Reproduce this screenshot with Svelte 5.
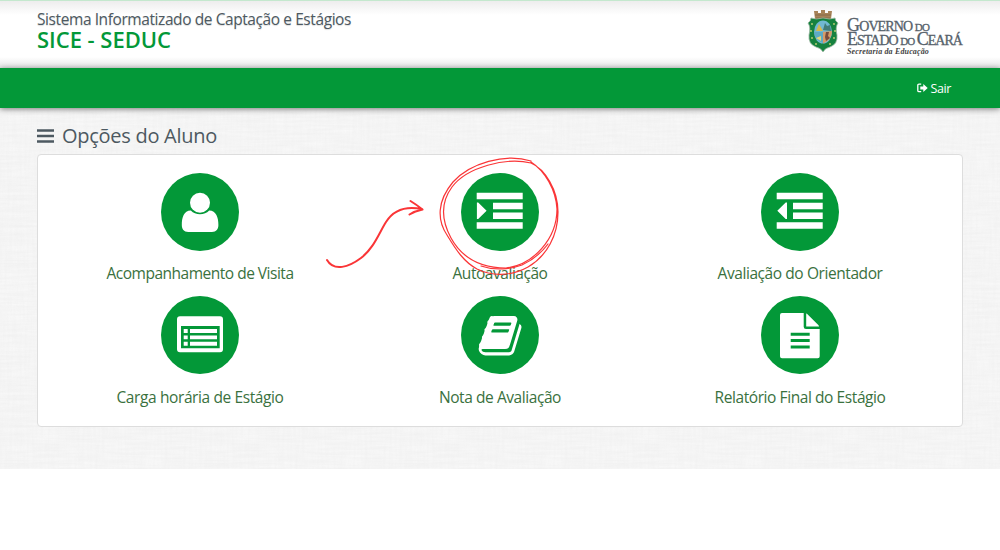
<script>
  const options = [
    { label: 'Acompanhamento de Visita', icon: 'user', width: 187 },
    { label: 'Autoavaliação', icon: 'indent', width: 95 },
    { label: 'Avaliação do Orientador', icon: 'outdent', width: 165 },
    { label: 'Carga horária de Estágio', icon: 'list', width: 167 },
    { label: 'Nota de Avaliação', icon: 'book', width: 122 },
    { label: 'Relatório Final do Estágio', icon: 'file', width: 171 }
  ];

  function fit(node, width) {
    const natural = node.getBoundingClientRect().width;
    node.style.letterSpacing = (width - natural) / node.textContent.length + 'px';
  }
</script>

<div class="page">
  <header>
    <div class="brand">
      <div><span class="system" use:fit={314}>Sistema Informatizado de Captação e Estágios</span></div>
      <div><strong use:fit={134}>SICE - SEDUC</strong></div>
    </div>
    <div class="government">
      <svg class="crest" width="32" height="44" viewBox="0 0 32 44">
        <path d="M7 1h4v2h3V0h4v3h3V1h4l-1 8H8z" fill="#a78358" />
        <path d="M8 5h16M9 8h14" stroke="#7d6546" stroke-width=".8" />
        <path d="M4 8Q9 10 16 8q7 2 12 0 0 3 3 5-3 4-1 12 1 9-7 12-5 1-7 5-2-4-7-5-8-3-7-12 2-8-1-12 3-2 3-5z" fill="#16823f" stroke="#9ab7a1" stroke-width=".8" />
        <ellipse cx="16" cy="22" rx="9" ry="11.500" fill="#71b8d2" />
        <path d="M15 22l10-1q0 9-9 12.500z" fill="#d69b69" />
        <path d="M7 22h9v11q-8-3-9-11z" fill="#5eabc5" />
        <path d="M9 21l3-7 4 7z" fill="#d5b84d" />
        <path d="M16 20l2-7 2 3 3-1 1 6z" fill="#427c79" />
        <path d="M19 22h3l-1 4 2 2-4 3-1-4z" fill="#784b3c" />
        <path d="M9 28l5-2v5z" fill="#e1d77a" />
        <g fill="#c5d477"><circle cx="5" cy="14" r=".9" /><circle cx="4" cy="21" r=".9" /><circle cx="5" cy="28" r=".9" /><circle cx="9" cy="34" r=".9" /><circle cx="27" cy="14" r=".9" /><circle cx="28" cy="21" r=".9" /><circle cx="27" cy="28" r=".9" /><circle cx="23" cy="34" r=".9" /></g>
      </svg>
      <div class="wordmark">
        <div><span use:fit={82}><b>G</b>OVERNO <small>DO</small></span></div>
        <div><span use:fit={115}><b>E</b>STADO <small>DO</small> <b>C</b>EARÁ</span></div>
        <div class="department"><span use:fit={82}>Secretaria da Educação</span></div>
      </div>
    </div>
  </header>

  <nav>
    <svg width="11" height="10" viewBox="0 0 11 10">
      <path d="M4.200 1.200H2q-1.200 0-1.200 1.200v5q0 1.200 1.200 1.200h2.200" fill="none" stroke="#fff" stroke-width="1.300" />
      <path d="M3.300 3.400h3V.9L10.700 5 6.300 9.100V6.600h-3z" fill="#fff" />
    </svg>
    <span use:fit={20.5}>Sair</span>
  </nav>

  <main>
    <h1>
      <svg width="17" height="15" viewBox="0 0 17 15"><path d="M0 1.500h17M0 7h17M0 12.500h17" stroke="#4d5961" stroke-width="2.600" /></svg>
      <span use:fit={155}>Opções do Aluno</span>
    </h1>
    <section>
      {#each options as option}
        <div class="option">
          <svg width="78" height="78" viewBox="0 0 78 78">
            <circle cx="39" cy="39" r="39" fill="#039838" />
            <g fill="#fff">
              {#if option.icon === 'user'}
                <circle cx="39" cy="29.700" r="10" />
                <path d="M29.800 37.500Q33.500 41.300 39 41.300t9.200-3.800c7 .2 9.200 7 9.200 14.500 0 4-2 7-6.500 7H27.300c-4.500 0-6.500-3-6.500-7 0-7.500 2-14.300 9-14.500z" />
              {:else if option.icon === 'indent'}
                <path d="M15.700 19.700h46v6.600h-46zM32 29.700h29.700v6.500H32zM32 39.500h29.700v6.400H32zM15.700 49.200h46v6.600h-46zM15.900 29.500h1.300l8.400 8.300-8.400 8.300h-1.300z" />
              {:else if option.icon === 'outdent'}
                <path d="M15.700 19.700h46v6.600h-46zM32 29.700h29.700v6.500H32zM32 39.500h29.700v6.400H32zM15.700 49.200h46v6.600h-46zM26 29.500h-1.300l-8.400 8.300 8.400 8.300H26z" />
              {:else if option.icon === 'list'}
                <path fill-rule="evenodd" d="M19 20.200h40q3 0 3 3v30q0 3-3 3H19q-3 0-3-3v-30q0-3 3-3zM20 30v22.300h38.700V30z" />
                <path d="M22.700 33h4v3.900h-4zM29 33h27v3.900H29zM22.700 39.400h4v3.900h-4zM29 39.400h27v3.900H29zM22.700 45.800h4v3.900h-4zM29 45.800h27v3.900H29z" />
              {:else if option.icon === 'book'}
                <path transform="translate(17.700 16.700) scale(.0257)" d="M1639 478q40 57 18 129l-275 906q-19 64-76.500 107.500t-122.500 43.500h-923q-77 0-148.500-53.500t-99.500-131.500q-24-67-2-127 0-4 3-27t4-37q1-8-3-21.500t-3-19.500q2-11 8-21t16.500-23.500 16.500-23.500q23-38 45-91.500t30-91.500q3-10 .5-30t-.5-28q3-11 17-28t17-23q21-36 42-92t25-90q1-9-2.500-32t.5-28q4-13 22-30.500t22-22.500q19-26 42.500-84.500t27.500-96.500q1-8-3-25.500t-2-26.500q2-8 9-18t18-23 17-21q8-12 16.500-30.500t15-35 16-36 19.500-32 26.500-23.500 36-11.500 47.500 5.500l-1 3q38-9 51-9h761q74 0 114 56t18 130l-274 906q-36 119-71.500 153.500t-128.500 34.500h-869q-27 0-38 15-11 16-1 43 24 70 144 70h923q29 0 56-15.500t35-41.500l300-987q7-22 5-57 38 15 59 43zm-1064 2q-4 13 2 22.500t20 9.500h608q13 0 25.500-9.500t16.500-22.500l21-64q4-13-2-22.500t-20-9.500h-608q-13 0-25.500 9.500t-16.500 22.500zm-83 256q-4 13 2 22.500t20 9.500h608q13 0 25.500-9.500t16.500-22.500l21-64q4-13-2-22.500t-20-9.500h-608q-13 0-25.500 9.500t-16.500 22.500z" />
              {:else}
                <path fill-rule="evenodd" d="M21 17h21.700v13.700q0 2.300 2.300 2.300h13.700v27.300q0 2-2 2H21q-2 0-2-2V19q0-2 2-2zM29.700 36.700v3h19v-3zM29.700 43.100v3h19v-3zM29.700 49.500v3h19v-3z" />
                <path d="M45.200 17.500q.8.200 1.500.9l10.600 10.600q.6.700.8 1.500H45.200z" />
              {/if}
            </g>
          </svg>
          <div class="label"><span use:fit={option.width}>{option.label}</span></div>
        </div>
      {/each}
    </section>
  </main>

  <svg class="annotation" width="1000" height="550" viewBox="0 0 1000 550" fill="none" stroke="#fa3537" stroke-linecap="round" stroke-linejoin="round">
    <path stroke-width="2" d="M327 260C334 272 349 267 361 258C374 248 379 233 386 222C394 209 407 206 422 209M410.500 201Q417 205 422.500 209.500Q415 211 409.500 214.500" />
    <path stroke-width="1.200" d="M531 161C505 153 470 163 453 182C437 201 437 220 447 235C456 250 464 262 477 269C491 276 510 277 528 267C547 256 558 235 558 212C558 190 545 169 531 163C506 157 467 167 452 187C438 206 444 225 451 238C462 258 481 268 506 268C533 265 557 239 557 209C556 190 545 171 531 162" />
    <path stroke-width="1.200" d="M481 266C495 271 511 269 522 265C533 260 542 252 548 244" />
  </svg>
</div>

<style>
  :global(body) { margin: 0; background: #fff; }
  .page { position: relative; width: 1000px; height: 550px; overflow: hidden; font-family: "Open Sans", sans-serif; color: #4d5961; }
  header { box-sizing: border-box; height: 68px; padding: 8px 37px 0 37px; display: flex; justify-content: space-between; border-top: 1px solid #c4e8ce; background: linear-gradient(#ededed 0, #fff 14px, #fff 56px, #e7e7e7 67px); }
  span, strong { white-space: nowrap; display: inline-block; }
  .brand div { height: 20px; display: flex; align-items: center; }
  .brand div + div { height: 20px; }
  .system { font-size: 15.500px; line-height: 20px; text-shadow: 0 1px 1px #ddd; }
  strong { color: #039838; font-size: 22px; font-weight: 600; line-height: 20px; }
  .government { display: flex; gap: 8px; width: 155px; padding-top: 1px; }
  .crest { flex: none; margin-left: -1px; }
  .wordmark { padding-top: 8px; font-family: "Liberation Serif", serif; font-size: 14px; color: #56616a; line-height: 14px; -webkit-text-stroke: .3px #56616a; }
  .wordmark div { height: 14px; }
  .wordmark b { font-size: 18px; font-weight: 400; }
  .wordmark small { font-size: 11px; }
  .wordmark .department { font-size: 8px; font-style: italic; font-weight: 700; line-height: 11px; color: #444; -webkit-text-stroke: 0; }
  nav { position: relative; box-sizing: border-box; height: 40px; padding: 0 49px 0 0; display: flex; align-items: center; justify-content: flex-end; gap: 3px; background: #039838; color: #fff; font-size: 12.500px; box-shadow: 0 1px 6px #777; }
  main { box-sizing: border-box; height: 361px; padding: 16px 37px 0; background: #f2f2f2 url("data:image/svg+xml,%3Csvg xmlns='http://www.w3.org/2000/svg' width='200' height='200'%3E%3Cfilter id='a' x='0' y='0' width='1' height='1'%3E%3CfeTurbulence type='fractalNoise' baseFrequency='.03 .4' numOctaves='2' stitchTiles='stitch'/%3E%3CfeColorMatrix values='0 0 0 0 1 0 0 0 0 1 0 0 0 0 1 .7 0 0 0 -.1'/%3E%3C/filter%3E%3Cfilter id='b' x='0' y='0' width='1' height='1'%3E%3CfeTurbulence type='fractalNoise' baseFrequency='.4 .03' numOctaves='2' stitchTiles='stitch'/%3E%3CfeColorMatrix values='0 0 0 0 .85 0 0 0 0 .85 0 0 0 0 .85 .6 0 0 0 -.18'/%3E%3C/filter%3E%3Crect width='200' height='200' filter='url(%23a)'/%3E%3Crect width='200' height='200' filter='url(%23b)'/%3E%3C/svg%3E"); }
  h1 { margin: 0; height: 30px; display: flex; align-items: center; gap: 8px; font-size: 20px; font-weight: 400; line-height: 24px; box-sizing: border-box; padding-bottom: 6px; }
  section { box-sizing: border-box; height: 273px; padding: 17.500px 12px 0 12px; display: grid; grid-template-columns: repeat(3, 1fr); grid-template-rows: 123px 123px; border: 1px solid #ddd; border-radius: 4px; background: #fff; }
  .option { display: flex; flex-direction: column; align-items: center; color: #3a713e; font-size: 15.500px; }
  .option > svg { display: block; flex: none; }
  .label { margin-top: 12.500px; line-height: 20px; }
  .option:nth-child(n + 4) .label { margin-top: 13.500px; }
  .annotation { position: absolute; inset: 0; pointer-events: none; }
</style>
